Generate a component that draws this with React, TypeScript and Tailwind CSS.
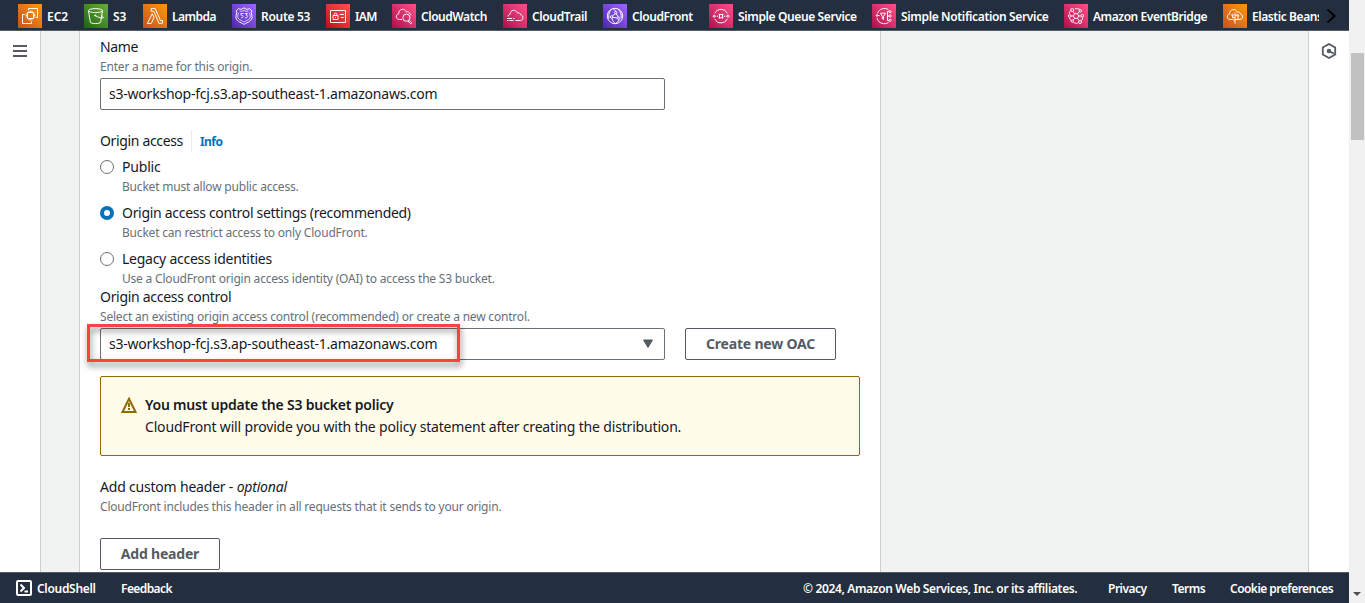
import type { ReactNode } from "react";

type Tone = "orange" | "green" | "purple" | "red" | "pink";

const tones: Record<Tone, string> = {
  orange: "bg-linear-to-tr from-[#C8511B] to-[#FF9900]",
  green: "bg-linear-to-tr from-[#1B660F] to-[#6CAE3E]",
  purple: "bg-linear-to-tr from-[#4D27A8] to-[#A166FF]",
  red: "bg-linear-to-tr from-[#BD0816] to-[#FF5252]",
  pink: "bg-linear-to-tr from-[#B0084D] to-[#FF4F8B]",
};

const services: { name: string; tone: Tone; width: string; tracking: string; icon: ReactNode }[] = [
  {
    name: "EC2",
    tone: "orange",
    width: "w-[66px]",
    tracking: "tracking-normal",
    icon: (
      <>
        <path d="M9.5 8.5h6v6h-6zM11 8.5V6.7M12.5 8.5V6.7M14 8.5V6.7M11 16.3v-1.8M12.5 16.3v-1.8M14 16.3v-1.8M9.5 10H7.7M9.5 11.5H7.7M9.5 13H7.7M17.3 10h-1.8M17.3 11.5h-1.8M17.3 13h-1.8" />
        <path d="M10.5 6V4.5h9v9h-1.7M6.7 10.5H4.5v9h9v-2.2" />
      </>
    ),
  },
  {
    name: "S3",
    tone: "green",
    width: "w-[59px]",
    tracking: "tracking-normal",
    icon: (
      <>
        <ellipse cx="11.5" cy="6.6" rx="7" ry="2" />
        <path d="M4.5 6.8l1.8 11.4c.3 1.8 10 1.8 10.4 0L18.5 6.8M11.5 11.8c2.5 1.4 7.6 3.2 7.9 2 .2-.8-1-1.6-2-2.2" />
        <circle cx="11.2" cy="11.5" r=".6" fill="white" />
      </>
    ),
  },
  {
    name: "Lambda",
    tone: "orange",
    width: "w-[89px]",
    tracking: "tracking-[-0.5px]",
    icon: (
      <path d="M8.2 4.5h4l5.4 12.3 1.9-.6v2.9l-3.5.4-5.2-12.2H8.2zM4.4 19.5l4.8-9.7 1.8 3.8-2.8 5.9z" />
    ),
  },
  {
    name: "Route 53",
    tone: "purple",
    width: "w-[94px]",
    tracking: "tracking-[-0.3px]",
    icon: (
      <>
        <path d="M12 3.8l2.2 1.3c1.3.5 2.4.1 3.3-.6l2.3 2.4c-1.2 2 .5 4 .2 6.8-.4 3.3-3.8 4.4-8 6.6-4.2-2.2-7.6-3.3-8-6.6-.3-2.8 1.4-4.8.2-6.8l2.3-2.4c.9.7 2 1.1 3.3.6z" />
        <path d="M7.8 7c2 .7 3.2.1 4.2-.8 1 .9 2.2 1.5 4.2.8M6.2 8.5c.4 2-.7 3-.4 5 .3 2 3.2 2.7 6.2 4.5 3-1.8 5.9-2.5 6.2-4.5.3-2-.8-3-.4-5" strokeWidth=".7" />
        <path d="M11.4 9.5H8.9v1.7c2.7-.5 3.2 2.8 0 2.8M12.8 9.5h2.6l-1.3 1.7c2.3 0 1.9 2.9-1.3 2.7" strokeWidth=".8" />
      </>
    ),
  },
  {
    name: "IAM",
    tone: "red",
    width: "w-[66px]",
    tracking: "tracking-[-0.6px]",
    icon: (
      <path d="M4.5 6.5h15v12h-15zM7 11.5h5v4H7zM8.2 11.5v-1.2c0-1.7 2.6-1.7 2.6 0v1.2M9.5 13v1M13.8 10.5h4M14.8 13.5h3" />
    ),
  },
  {
    name: "CloudWatch",
    tone: "pink",
    width: "w-[111px]",
    tracking: "tracking-[-0.45px]",
    icon: (
      <>
        <path d="M10 15.5H7.5c-4-.3-4.3-4.7-.8-5.6C6.4 4.6 13 3.7 14.4 8c1.5-.8 3 .2 3.1 1.7 1 .3 1.6.8 2 1.6" />
        <circle cx="14.4" cy="13.7" r="3.6" />
        <path d="M17 16.3l2.4 2.4c.5.8-.5 1.5-1.1.9L16 17" />
      </>
    ),
  },
  {
    name: "CloudTrail",
    tone: "pink",
    width: "w-[100px]",
    tracking: "tracking-[-0.37px]",
    icon: (
      <path d="M5.2 12.5c-.2-1.3.6-1.900 2-2.300-.3-4.600 6-5.300 7.300-1.200 1.500-.7 2.700.3 2.900 1.700 3.400.7 3.200 5.500.1 5.800h-5M4 14.500h5M10 14.500h1.500M4 16.500h1.500M6.500 16.500h4" />
    ),
  },
  {
    name: "CloudFront",
    tone: "purple",
    width: "w-[106px]",
    tracking: "tracking-[-0.42px]",
    icon: (
      <>
        <circle cx="12" cy="12" r="7.7" />
        <circle cx="12.8" cy="8.6" r="1.2" />
        <circle cx="8.5" cy="13" r="1.2" />
        <circle cx="15.7" cy="14.3" r="1.2" />
        <path d="M12.2 9.8l-3 2.2M13.3 9.7l1.9 3.5M9.7 13.3l4.8.8M9 5c-2.7 2-3.6 5.2-3.2 9.7M10 4.6c1.3.5 2 1.5 2.4 2.7M9 14.3c.5 2.3 1.5 4 3.2 5.3M15 5c2.5 2 3.5 5 3.2 9M16 15.5c-.5 1.7-1.7 3-3 3.8" />
      </>
    ),
  },
  {
    name: "Simple Queue Service",
    tone: "pink",
    width: "w-[163px]",
    tracking: "tracking-[-0.38px]",
    icon: (
      <>
        <path d="M5.8 9.4a6.8 6.8 0 0 1 12.4 0M5.8 14.9a6.8 6.8 0 0 0 12.4 0M6.3 12.2h.8M16.900 12.200h.8" />
        <path d="M10.5 9.8v4.800M13.500 9.800v4.800M9.700 10.600h4.600M9.700 13.800h4.600" />
        <circle cx="5.1" cy="12.2" r="1" />
        <circle cx="18.9" cy="12.2" r="1" />
        <circle cx="8.5" cy="12.2" r=".3" fill="white" />
        <circle cx="15.500" cy="12.200" r=".3" fill="white" />
      </>
    ),
  },
  {
    name: "Simple Notification Service",
    tone: "pink",
    width: "w-[192px]",
    tracking: "tracking-[-0.35px]",
    icon: (
      <>
        <path d="M5.5 9.3C7 4.8 12.8 3 16.6 5.8M5 14c1.2 5.5 7.6 7.2 11.7 4.3M5.500 11.500h2.100M8.500 9.200h5l-2 3.200v3l-1.200-.8v-2.200z" />
        <path d="M17 7.500h-1.500v9H17M14.800 12H17" />
        <circle cx="18.1" cy="7.700" r="1.100" />
        <circle cx="18.1" cy="12" r="1.100" />
        <circle cx="18.1" cy="16.300" r="1.100" />
        <circle cx="5" cy="11.500" r=".8" />
      </>
    ),
  },
  {
    name: "Amazon EventBridge",
    tone: "pink",
    width: "w-[159px]",
    tracking: "tracking-[-0.44px]",
    icon: (
      <>
        <path d="M10.7 9.7h2.8l1.4 2.3-1.4 2.3h-2.8L9.3 12zM9.3 12H7M10.7 9.7L9 7.5M13.5 9.7l1.7-1.8M14.9 12H17M13.5 14.3l1.5 2.2M10.7 14.3L9.3 16" />
        <circle cx="8.2" cy="6" r="1.5" />
        <circle cx="16.3" cy="6.8" r="1.2" />
        <circle cx="5.7" cy="12" r="1.3" />
        <circle cx="18.3" cy="11.8" r="1.3" />
        <circle cx="16" cy="18" r="1.5" />
        <circle cx="8.3" cy="17" r="1.2" />
        <path d="M11 4.8c2-.4 3.600-.1 5 .8M5.200 10c0-1.200.6-2.300 1.500-3.200M18.700 13.700c-.2 1.200-.6 2.200-1.400 3M13.700 19.200c-1.500.3-3 0-4.200-.7M5.500 14c.2.900.7 1.700 1.400 2.300" />
      </>
    ),
  },
  {
    name: "Elastic Beanstalk",
    tone: "orange",
    width: "w-[96px]",
    tracking: "tracking-[-0.42px]",
    icon: (
      <>
        <path d="M9.5 15.5H7.3c-3.8-.3-4-4.6-.7-5.5-.3-5 6.3-6 7.700-1.800 1.500-.7 3 .3 3.100 1.800 3 .8 2.700 5.200-.4 5.500h-2.500" />
        <path d="M12 8.500v11M12 13.500H9.500v-2M12 16.500l-2.500-1.300M12 12l2.500-1.500M12 15.500h3v-3.200" />
        <circle cx="9.500" cy="11" r=".8" />
        <circle cx="14.800" cy="11.500" r=".8" />
      </>
    ),
  },
];

function ServiceIcon({ tone, children }: { tone: Tone; children: ReactNode }) {
  return (
    <span className={`size-6 shrink-0 ${tones[tone]}`}>
      <svg viewBox="0 0 24 24" className="size-6" fill="none" stroke="white" strokeWidth="0.95">
        {children}
      </svg>
    </span>
  );
}

function TopBar() {
  return (
    <header className="flex h-[31px] shrink-0 items-start border-b border-[#545b64] bg-[#232f3e] pt-1 pl-[18px]">
      <nav className="flex min-w-0">
        {services.map((s) => (
          <a key={s.name} className={`flex shrink-0 items-center gap-[5px] overflow-hidden text-xs font-semibold whitespace-nowrap text-white ${s.width} ${s.tracking}`}>
            <ServiceIcon tone={s.tone}>{s.icon}</ServiceIcon>
            <span className="pt-px">{s.name}</span>
          </a>
        ))}
      </nav>
      <svg viewBox="0 0 12 16" className="mt-1 ml-[6px] h-4 w-3 shrink-0" fill="none" stroke="black" strokeWidth="2">
        <path d="M2.500 1.500l7 6.500-7 6.500" />
      </svg>
    </header>
  );
}

function Label({ children, className = "tracking-[-0.27px]" }: { children: ReactNode; className?: string }) {
  return <div className={`text-sm leading-[22px] whitespace-nowrap text-[#16191f] ${className}`}>{children}</div>;
}

function Hint({ children }: { children: ReactNode }) {
  return <div className="-mb-px pt-px text-xs leading-4 tracking-[-0.2px] whitespace-nowrap text-[#687078]">{children}</div>;
}

function RadioOption({ label, hint, checked = false, tracking }: { label: string; hint: string; checked?: boolean; tracking: string }) {
  return (
    <div className="flex h-[38px] gap-2">
      <span
        className={`mt-1 size-[14px] shrink-0 rounded-full bg-white ${checked ? "border-4 border-[#0073bb]" : "border border-[#687078]"}`}
      />
      <div>
        <Label className={tracking}>{label}</Label>
        <Hint>{hint}</Hint>
      </div>
    </div>
  );
}

function Field({ children, className = "" }: { children: ReactNode; className?: string }) {
  return (
    <div className={`flex h-8 w-[565px] items-center justify-between rounded-[2px] border border-[#687078] bg-white pl-2 text-sm tracking-[-0.22px] text-[#16191f] ${className}`}>
      {children}
    </div>
  );
}

function Button({ children, className = "" }: { children: ReactNode; className?: string }) {
  return (
    <button className={`flex h-8 items-center justify-center rounded-[2px] border border-[#545b64] bg-white text-sm font-bold tracking-[-0.2px] text-[#545b64] ${className}`}>
      {children}
    </button>
  );
}

function OriginForm() {
  return (
    <main className="w-[802px] shrink-0 border-x border-[#c9cfcf] bg-white px-5 pt-[5px]">
      <Label className="tracking-[-0.4px]">Name</Label>
      <Hint>Enter a name for this origin.</Hint>
      <Field className="mt-1">s3-workshop-fcj.s3.ap-southeast-1.amazonaws.com</Field>

      <div className="mt-5 flex items-center">
        <Label className="tracking-[-0.35px]">Origin access</Label>
        <a className="ml-2 h-[22px] border-l border-[#eaeded] pt-px pl-2 text-xs leading-[22px] font-bold tracking-[-0.5px] text-[#0073bb]">Info</a>
      </div>
      <div className="mt-1 flex flex-col gap-2">
        <RadioOption label="Public" hint="Bucket must allow public access." tracking="tracking-[-0.2px]" />
        <RadioOption
          label="Origin access control settings (recommended)"
          hint="Bucket can restrict access to only CloudFront."
          tracking="tracking-[-0.3px]"
          checked
        />
        <RadioOption
          label="Legacy access identities"
          hint="Use a CloudFront origin access identity (OAI) to access the S3 bucket."
          tracking="tracking-[-0.26px]"
        />
      </div>

      <Label className="tracking-[-0.3px]">Origin access control</Label>
      <Hint>Select an existing origin access control (recommended) or create a new control.</Hint>
      <div className="relative mt-1 flex gap-5">
        <Field className="pr-[10px]">
          s3-workshop-fcj.s3.ap-southeast-1.amazonaws.com
          <svg viewBox="0 0 12 10" className="h-[10px] w-3" fill="#545b64">
            <path d="M1.500 1h9L6 8.500z" stroke="#545b64" strokeLinejoin="round" />
          </svg>
        </Field>
        <Button className="w-[151px]">Create new OAC</Button>
        <div className="absolute -top-[4px] -left-[13px] h-[38px] w-[373px] border-3 border-[#fb4242] drop-shadow-[1px_4px_3px_rgba(0,0,0,0.5)]" />
      </div>

      <div className="mt-4 flex h-20 gap-2 rounded-[2px] border border-[#906806] bg-[#fffce9] px-5 pt-[17px]">
        <svg viewBox="0 0 16 16" className="mt-[3px] size-4 shrink-0" fill="none" stroke="#906806" strokeWidth="2">
          <path d="M8 1.800L14.500 15h-13zM8 6v4M8 11v2" />
        </svg>
        <div>
          <div className="text-sm leading-[22px] font-semibold tracking-[-0.21px] text-[#16191f]">You must update the S3 bucket policy</div>
          <Label className="tracking-[-0.175px]">
            CloudFront will provide you with the policy statement after creating the distribution.
          </Label>
        </div>
      </div>

      <div className="mt-5">
        <Label className="tracking-[-0.2px]">
          Add custom header - <i>optional</i>
        </Label>
        <Hint>CloudFront includes this header in all requests that it sends to your origin.</Hint>
        <Button className="mt-6 w-[120px]">Add header</Button>
      </div>
    </main>
  );
}

function Footer() {
  return (
    <footer className="flex h-[31px] shrink-0 items-center border-t border-[#545b64] bg-[#232f3e] pr-4 pl-4 text-xs font-semibold whitespace-nowrap text-white">
      <svg viewBox="0 0 16 16" className="mr-[5px] size-4" fill="none" stroke="white" strokeWidth="2">
        <rect x="1" y="1" width="14" height="14" rx="1" />
        <path d="M4.500 4.500L8 8l-3.500 3.500M8.500 11.500H12" />
      </svg>
      <div className="flex flex-1 pt-px">
        <a className="w-[84px] tracking-[-0.3px]">CloudShell</a>
        <a className="tracking-[-0.58px]">Feedback</a>
        <span className="ml-auto w-[305px] tracking-[-0.35px]">© 2024, Amazon Web Services, Inc. or its affiliates.</span>
        <a className="w-16 tracking-[-0.5px]">Privacy</a>
        <a className="w-[58px] tracking-[-0.5px]">Terms</a>
        <a className="w-[103px] tracking-[-0.53px]">Cookie preferences</a>
      </div>
    </footer>
  );
}

export default function App() {
  return (
    <div className="flex h-[603px] w-[1365px] overflow-hidden font-['Noto_Sans','Open_Sans',sans-serif]">
      <div className="flex w-[1349px] shrink-0 flex-col">
        <TopBar />
        <div className="flex min-h-0 flex-1 overflow-hidden bg-[#f1f3f3]">
          <aside className="w-[41px] shrink-0 border-r border-[#c9cfcf] bg-white">
            <svg viewBox="0 0 14 12" className="mt-[14px] ml-[13px] h-3 w-[14px]" stroke="#545b64" strokeWidth="2">
              <path d="M0 1h14M0 6h14M0 11h14" />
            </svg>
          </aside>
          <div className="w-[38px] shrink-0" />
          <OriginForm />
          <aside className="ml-auto w-[41px] shrink-0 border-l border-[#c9cfcf] bg-white">
            <svg viewBox="0 0 16 16" className="mt-3 ml-3 size-4" fill="none" stroke="#545b64" strokeWidth="1.800">
              <path d="M8 1l6.200 3.500v7L8 15l-6.200-3.500v-7z" />
              <circle cx="8" cy="8" r="1.400" fill="#545b64" />
              <path d="M8 8l5 2.700" />
            </svg>
          </aside>
        </div>
        <Footer />
      </div>
      <div className="flex w-4 shrink-0 flex-col items-center justify-between bg-[#f1f1f1] pt-[53px] pb-[7px]">
        <div className="h-[87px] w-[13px] bg-[#c1c1c1]" />
        <svg viewBox="0 0 8 4" className="h-1 w-2" fill="#505050">
          <path d="M0 0h8L4 4z" />
        </svg>
      </div>
    </div>
  );
}
